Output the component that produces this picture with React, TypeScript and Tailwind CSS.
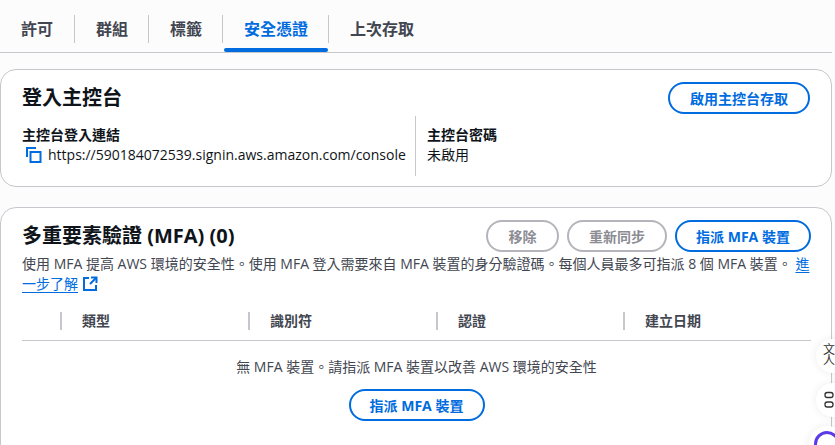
import React from 'react';

const FONT = '"Open Sans", "Noto Sans CJK TC", sans-serif';

const tabs = [
  { label: '許可', width: 'w-[74px]' },
  { label: '群組', width: 'w-[74px]' },
  { label: '標籤', width: 'w-[74px]' },
  { label: '安全憑證', width: 'w-[106px]', active: true },
  { label: '上次存取', width: 'w-[106px]' },
];

const CopyIcon = () => (
  <svg width="16" height="16" viewBox="0 0 16 16" fill="none" stroke="#006ce0" strokeWidth="2" className="shrink-0">
    <path d="M1 10V1h9" />
    <rect x="4.5" y="5" width="10" height="10" />
  </svg>
);

const ExternalIcon = () => (
  <svg width="16" height="16" viewBox="0 0 16 16" fill="none" stroke="#006ce0" strokeWidth="2" className="inline-block ml-[4px] align-[-3px]">
    <path d="M7 2H2v12h12V9" />
    <path d="M9 1.5h5.5V7" />
    <path d="M14 2L8 8" />
  </svg>
);

const PillButton = ({ children, disabled, width }: { children: React.ReactNode; disabled?: boolean; width: string }) => (
  <button
    className={`h-[32px] rounded-full border-2 bg-white text-[14px] font-bold flex items-center justify-center shrink-0 ${width} ${
      disabled ? 'border-[#b4b4bb] text-[#8c8c94]' : 'border-[#006ce0] text-[#006ce0]'
    }`}
  >
    {children}
  </button>
);

const columns = [
  { label: '類型', width: 'w-[188px]' },
  { label: '識別符', width: 'w-[188px]' },
  { label: '認證', width: 'w-[187px]' },
  { label: '建立日期', width: 'flex-1' },
];

const App: React.FC = () => {
  return (
    <div className="relative w-[835px] h-[445px] overflow-hidden bg-[#fcfcfd]" style={{ fontFamily: FONT }}>
      <div className="w-[832px]">
        {/* tabs */}
        <div className="flex h-[53px] border-b border-[#c6c6cd] pt-[15px]">
          {tabs.map((t, i) => (
            <div key={t.label} className={`relative h-[37px] flex items-start ${t.width}`}>
              {i > 0 && <span className="absolute left-0 top-0 h-[28px] w-px bg-[#c6c6cd]" />}
              <span className={`text-[16px] leading-[28px] font-bold whitespace-nowrap ${i === 0 ? 'pl-[21px]' : 'pl-[22px]'} ${t.active ? 'text-[#006ce0]' : 'text-[#424650]'}`}>
                {t.label}
              </span>
              {t.active && <span className="absolute left-[2px] right-0 top-[33px] h-[4px] rounded-full bg-[#006ce0]" />}
            </div>
          ))}
        </div>

        {/* console sign-in */}
        <section className="mt-[16px] h-[118px] rounded-[16px] border border-[#c6c6cd] bg-white px-[21px] pt-[12px]">
          <div className="flex items-center justify-between h-[32px]">
            <h2 className="text-[20px] font-bold leading-[32px] text-[#0f141a]">登入主控台</h2>
            <PillButton width="w-[142px]">啟用主控台存取</PillButton>
          </div>
          <div className="flex mt-[2px] h-[60px]">
            <div className="w-[394px] border-r border-[#c6c6cd] pt-[9px]">
              <div className="text-[14px] font-bold leading-[20px] text-[#0f141a]">主控台登入連結</div>
              <div className="flex items-center gap-[6px] pl-[4px] leading-[20px] text-[14px] text-[#0f141a]">
                <CopyIcon />
                <span>https://590184072539.signin.aws.amazon.com/console</span>
              </div>
            </div>
            <div className="pl-[11px] pt-[9px]">
              <div className="text-[14px] font-bold leading-[20px] text-[#0f141a]">主控台密碼</div>
              <div className="text-[14px] leading-[20px] text-[#0f141a]">未啟用</div>
            </div>
          </div>
        </section>

        {/* MFA */}
        <section className="mt-[20px] h-[260px] rounded-[16px] border border-[#c6c6cd] bg-white pl-[21px] pr-[20px] pt-[12px]">
          <div className="flex items-center h-[32px]">
            <h2 className="flex-1 text-[20px] font-bold leading-[32px] text-[#0f141a]">多重要素驗證 (MFA) (0)</h2>
            <div className="flex gap-[8px]">
              <PillButton disabled width="w-[73px]">移除</PillButton>
              <PillButton disabled width="w-[100px]">重新同步</PillButton>
              <PillButton width="w-[136px]">指派 MFA 裝置</PillButton>
            </div>
          </div>
          <p className="mt-[2px] text-[14px] leading-[20px] text-[#424650]">
            使用 MFA 提高 AWS 環境的安全性。使用 MFA 登入需要來自 MFA 裝置的身分驗證碼。每個人員最多可指派 8 個 MFA 裝置。{' '}
            <a className="text-[#006ce0] underline underline-offset-[3px]">進一步了解</a>
            <ExternalIcon />
          </p>

          <div className="mt-[7px] flex h-[40px] items-center border-b border-[#c6c6cd] pl-[38px]">
            {columns.map(c => (
              <div key={c.label} className={`flex items-center h-[18px] border-l-2 border-[#c6c6cd] pl-[20px] ${c.width}`}>
                <span className="text-[14px] font-bold text-[#424650]">{c.label}</span>
              </div>
            ))}
          </div>

          <div className="flex flex-col items-center pt-[16px]">
            <div className="text-[14px] leading-[20px] text-[#424650]">無 MFA 裝置。請指派 MFA 裝置以改善 AWS 環境的安全性</div>
            <div className="mt-[12px]">
              <PillButton width="w-[136px]">指派 MFA 裝置</PillButton>
            </div>
          </div>
        </section>
      </div>

      {/* floating browser-extension buttons */}
      <div className="absolute left-[816px] top-[339px] w-[34px] h-[34px] rounded-full bg-white shadow-[0_0_8px_rgba(0,0,0,0.08)] pl-[7px] pt-[5px]">
        <div className="text-[12px] leading-[12px] text-[#333]">文</div>
        <div className="text-[12px] leading-[10px] text-[#333]">人</div>
      </div>
      <div className="absolute left-[816px] top-[383px] w-[34px] h-[34px] rounded-full bg-white shadow-[0_0_8px_rgba(0,0,0,0.08)]">
        <svg width="34" height="34" viewBox="0 0 34 34" fill="none" stroke="#333" strokeWidth="1.3">
          <rect x="9" y="9.5" width="8" height="5" rx="2.2" />
          <rect x="9" y="19" width="8" height="5" rx="2.2" />
        </svg>
      </div>
      <div className="absolute left-[809px] top-[426px] w-[36px] h-[36px] rounded-full bg-white shadow-[0_0_8px_rgba(0,0,0,0.08)] flex items-center justify-center">
        <div className="w-[26px] h-[26px] rounded-full border-[3px] border-[#5b3be8]" />
      </div>
    </div>
  );
};

export default App;
